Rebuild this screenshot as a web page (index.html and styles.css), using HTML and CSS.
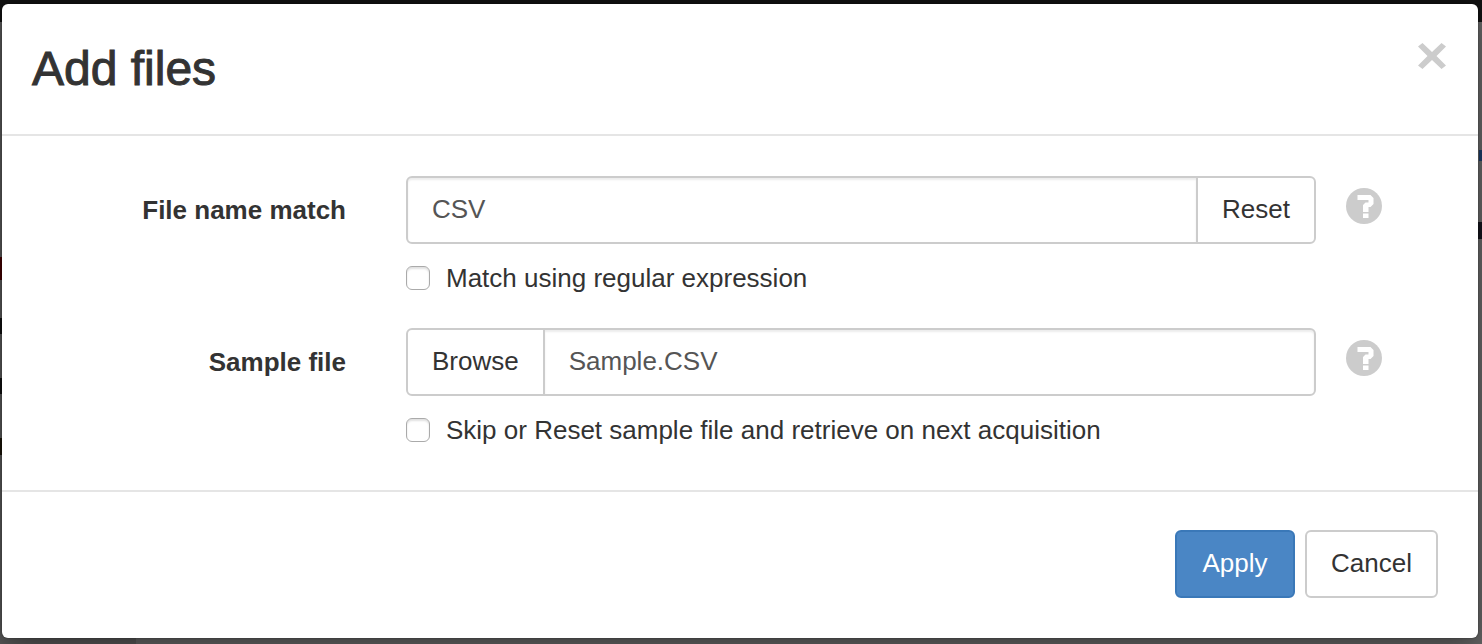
FILE: index.html
```html
<!DOCTYPE html>
<html lang="en">
<head>
<meta charset="utf-8">
<title>Add files</title>
<link rel="stylesheet" href="styles.css">
</head>
<body>
<svg class="sprite" aria-hidden="true">
  <symbol id="help" viewBox="0 0 36 36">
    <circle cx="18" cy="18" r="18" fill="#ccc"/>
    <path fill="#fff" d="M11.5 7H24.5L27.5 10V16L24.5 19H22.5V24H17V17L19.5 14.5H22.5V12H11.5ZM17 25.5H22.5V30H17Z"/>
  </symbol>
</svg>
<main class="modal" role="dialog" aria-labelledby="title">
  <header class="modal-header">
    <h1 class="modal-title" id="title">Add files</h1>
    <button class="close" type="button" aria-label="Close">
      <svg class="close-icon" viewBox="0 0 28 28" aria-hidden="true"><path fill="#ccc" d="M0 4.5L4.5 1L14 10L23.5 1L28 4.5L18.5 14L28 23.5L23.5 27L14 18L4.5 27L0 23.5L9.500 14Z"/></svg>
    </button>
  </header>
  <form class="modal-form">
    <div class="modal-body">
      <div class="row">
        <label class="row-label" for="match">File name match</label>
        <div class="control">
          <div class="group">
            <input class="field" id="match" type="text" value="CSV">
            <button class="btn" type="button">Reset</button>
          </div>
          <label class="check"><input class="check-box" type="checkbox">Match using regular expression</label>
        </div>
        <button class="help" type="button" aria-label="Help"><svg class="help-icon"><use href="#help"/></svg></button>
      </div>
      <div class="row">
        <label class="row-label" for="sample">Sample file</label>
        <div class="control">
          <div class="group">
            <button class="btn" type="button">Browse</button>
            <input class="field" id="sample" type="text" value="Sample.CSV">
          </div>
          <label class="check"><input class="check-box" type="checkbox">Skip or Reset sample file and retrieve on next acquisition</label>
        </div>
        <button class="help" type="button" aria-label="Help"><svg class="help-icon"><use href="#help"/></svg></button>
      </div>
    </div>
    <footer class="modal-footer">
      <button class="btn btn-primary" type="button">Apply</button>
      <button class="btn" type="button">Cancel</button>
    </footer>
  </form>
</main>
</body>
</html>
```

FILE: styles.css
```css
* {
  box-sizing: border-box;
}

html {
  min-height: 100%;
  /* Dimmed page behind the dialog */
  background:
    linear-gradient(#111, #111) 0 0 / 100% 22px no-repeat,
    linear-gradient(#400, #400) 0 257px / 2px 23px no-repeat,
    linear-gradient(#111, #111) 0 318px / 2px 16px no-repeat,
    linear-gradient(#111, #111) 0 378px / 2px 16px no-repeat,
    linear-gradient(#1a1408, #1a1408) 0 438px / 2px 17px no-repeat,
    linear-gradient(#1c3a66, #1c3a66) 100% 150px / 3px 11px no-repeat,
    linear-gradient(#14141c, #14141c) 100% 222px / 4px 17px no-repeat,
    linear-gradient(90deg, #585858 136px, #666 136px);
}

body {
  margin: 0;
  padding: 4px 4px 6px 2px;
  color: #333;
  font: 26px/36px "Liberation Sans", Arial, sans-serif;
}

.sprite {
  display: none;
}

.modal {
  background: #fff;
  border-radius: 6px;
  box-shadow: 0 0 2px rgba(0, 0, 0, .4), 0 10px 30px rgba(0, 0, 0, .4);
}

.modal-header {
  display: flex;
  justify-content: space-between;
  align-items: flex-start;
  padding: 30px;
  border-bottom: 2px solid #e5e5e5;
}

/* The thin stroke gives the regular face a medium weight */
.modal-title {
  margin: 0;
  font-size: 48px;
  font-weight: normal;
  line-height: 70px;
  -webkit-text-stroke: 1px #333;
}

.close,
.help {
  padding: 0;
  border: 0;
  background: none;
}

.close {
  margin: 8px 2px;
}

.close-icon {
  display: block;
  width: 28px;
  height: 28px;
}

.modal-body {
  display: grid;
  gap: 32px;
  padding: 40px 96px 42px 30px;
}

.row {
  display: grid;
  grid-template-columns: 314px 1fr 36px;
  column-gap: 30px;
  align-items: start;
}

.row-label {
  padding-top: 16px;
  font-weight: bold;
  text-align: right;
}

.control {
  padding-left: 30px;
}

.group {
  display: flex;
}

.field,
.btn {
  height: 68px;
  padding: 0 24px 2px;
  border: 2px solid #ccc;
  border-radius: 6px;
  background: #fff;
  color: #333;
  font: inherit;
}

.field {
  flex: 1;
  min-width: 0;
  color: #555;
  box-shadow: inset 0 2px 2px rgba(0, 0, 0, .075);
}

.group > :first-child {
  border-top-right-radius: 0;
  border-bottom-right-radius: 0;
}

.group > :last-child {
  margin-left: -2px;
  border-top-left-radius: 0;
  border-bottom-left-radius: 0;
}

.check {
  display: flex;
  align-items: center;
  gap: 16px;
  margin-top: 16px;
}

.check-box {
  appearance: none;
  flex: none;
  width: 24px;
  height: 24px;
  margin: 0;
  border: 1px solid #aaa;
  border-radius: 6px;
  background: #fff;
  box-shadow: inset 0 2px 2px rgba(0, 0, 0, .12);
}

.help {
  margin-top: 12px;
}

.help-icon {
  display: block;
  width: 36px;
  height: 36px;
}

.modal-footer {
  display: flex;
  justify-content: flex-end;
  gap: 10px;
  padding: 38px 40px 40px;
  border-top: 2px solid #e5e5e5;
}

.modal-footer .btn {
  min-width: 120px;
}

.btn-primary {
  border-color: #3a78b8;
  background: #4a86c5;
  color: #fff;
}
```
